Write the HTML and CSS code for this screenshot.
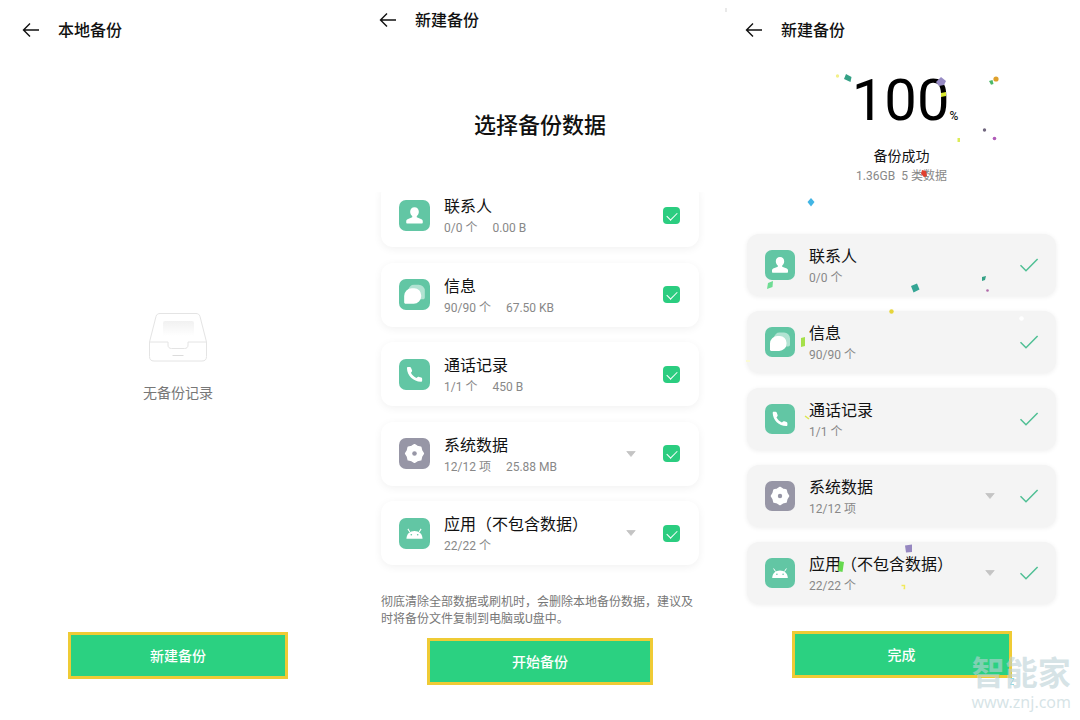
FILE: index.html
```html
<!DOCTYPE html>
<html lang="zh-CN">
<head>
<meta charset="utf-8">
<meta name="viewport" content="width=device-width, initial-scale=1">
<title>本地备份</title>
<link rel="stylesheet" href="styles.css">
</head>
<body>
<svg class="sprite" aria-hidden="true">
  <symbol id="i-back" viewBox="0 0 18 16"><path d="M8 1.500 1.500 8 8 14.500M1.500 8H17" fill="none" stroke="currentColor" stroke-width="1.400"/></symbol>
  <symbol id="i-contact" viewBox="0 0 30 30"><path d="M15 7c2.600 0 4.200 1.900 4.200 4.300 0 1.800-.8 3.400-2 4.300v1.200l4.600 1.800c.8.400 1.200 1 1.200 1.800v1.400c0 .6-.4 1-1 1H8c-.6 0-1-.4-1-1v-1.400c0-.8.4-1.400 1.200-1.800l4.600-1.800v-1.200c-1.200-.9-2-2.500-2-4.300C10.800 8.900 12.400 7 15 7z" fill="#fff"/></symbol>
  <symbol id="i-message" viewBox="0 0 30 30"><path d="M14.500 5.500H19a6 6 0 0 1 6 6v6.300c0 1.100-.7 1.700-1.700 1.700H15l-6-9c.8-3 2.500-5 5.500-5z" fill="#fff" opacity=".5"/><path d="M12.500 9h2.300a6.700 6.700 0 0 1 6.700 6.700v1A7.300 7.300 0 0 1 14.200 24H6.500c-.9 0-1.500-.6-1.500-1.500v-6A7.500 7.500 0 0 1 12.500 9z" fill="#fff"/></symbol>
  <symbol id="i-phone" viewBox="0 0 30 30"><path d="M7.700 9c0-.7.400-1.200 1-1.200h1.800c.6 0 1 .3 1.200.8l.9 2.400c.2.500.1.900-.2 1.300l-.9 1.100c1.300 2.300 3 3.900 5.400 5.100l1.200-1c.4-.3.800-.4 1.300-.2l2.200.7c.5.200.8.600.8 1.200v1.700c0 .7-.5 1.200-1.200 1.200C13.800 21.800 7.900 16.200 7.700 9z" fill="#fff"/></symbol>
  <symbol id="i-system" viewBox="0 0 30 30"><path d="M15 6.500l2.700 1.700 3.300.8.800 3.300 1.700 2.700-1.700 2.700-.8 3.300-3.300.8-2.700 1.700-2.700-1.700-3.300-.8-.8-3.300L6.500 15l1.700-2.700L9 9l3.300-.8z" fill="#fff" stroke="#fff" stroke-width="1.600" stroke-linejoin="round"/><circle cx="15" cy="15" r="2.200" fill="#9796a6"/></symbol>
  <symbol id="i-app" viewBox="0 0 30 30"><path d="M10.500 13.500 8.600 10.500M19.500 13.500l1.900-3" fill="none" stroke="#fff"/><path d="M7.200 20c.2-4.800 3.400-7.500 7.800-7.500s7.600 2.700 7.800 7.500z" fill="#fff"/><circle cx="11.900" cy="16.200" r=".8" fill="#62c6a4"/><circle cx="18.100" cy="16.200" r=".8" fill="#62c6a4"/></symbol>
  <symbol id="i-caret" viewBox="0 0 10 6"><path d="M.8.500h8.400L5 5.500z" fill="#c4c4c4" stroke="#c4c4c4" stroke-linejoin="round" stroke-width=".8"/></symbol>
  <symbol id="i-tick" viewBox="0 0 20 16"><path d="M1.500 8.300 7 13.800 18.600 2" fill="none" stroke="#4fbf94" stroke-width="1.500"/></symbol>
</svg>

<main class="screens">
  <section class="screen screen-empty">
    <header class="bar">
      <button class="back" type="button" aria-label="返回"><svg><use href="#i-back"/></svg></button>
      <h1 class="bar-title">本地备份</h1>
    </header>
    <div class="empty">
      <svg class="tray" viewBox="0 0 60 52" aria-hidden="true">
        <defs><linearGradient id="fade" x1="0" y1="0" x2="0" y2="1"><stop offset="0" stop-color="#f1f1f1"/><stop offset="1" stop-color="#fff"/></linearGradient></defs>
        <path d="M17 9h27q2 0 2 2v13H15V11q0-2 2-2z" fill="url(#fade)"/>
        <path d="M1.500 30 8 4.500C8.700 2.300 10 1.500 12 1.500h36c2 0 3.300.8 4 3L58.500 30v14.500c0 3-1.500 4.500-4.500 4.500H6c-3 0-4.500-1.500-4.500-4.500zM1.500 30H20v3c0 2.500 1.500 3.500 3.500 3.500h13c2 0 3.500-1 3.500-3.500v-3h18.500" fill="none" stroke="#e4e4e4"/>
        <path d="M24.500 43.500h11" stroke="#dcdcdc"/>
      </svg>
      <p class="empty-text">无备份记录</p>
    </div>
    <button class="action" type="button">新建备份</button>
  </section>

  <section class="screen screen-pick">
    <header class="bar">
      <button class="back" type="button" aria-label="返回"><svg><use href="#i-back"/></svg></button>
      <h1 class="bar-title">新建备份</h1>
    </header>
    <h2 class="heading">选择备份数据</h2>
    <div class="scroller">
      <ul class="list">
        <li class="card">
          <svg class="icon"><use href="#i-contact"/></svg>
          <label class="info" for="c1"><span class="name">联系人</span><span class="meta"><span>0/0 个</span><span>0.00 B</span></span></label>
          <input class="check" id="c1" type="checkbox" checked>
        </li>
        <li class="card">
          <svg class="icon"><use href="#i-message"/></svg>
          <label class="info" for="c2"><span class="name">信息</span><span class="meta"><span>90/90 个</span><span>67.50 KB</span></span></label>
          <input class="check" id="c2" type="checkbox" checked>
        </li>
        <li class="card">
          <svg class="icon"><use href="#i-phone"/></svg>
          <label class="info" for="c3"><span class="name">通话记录</span><span class="meta"><span>1/1 个</span><span>450 B</span></span></label>
          <input class="check" id="c3" type="checkbox" checked>
        </li>
        <li class="card">
          <svg class="icon icon-gray"><use href="#i-system"/></svg>
          <label class="info" for="c4"><span class="name">系统数据</span><span class="meta"><span>12/12 项</span><span>25.88 MB</span></span></label>
          <button class="caret" type="button" aria-label="展开"><svg><use href="#i-caret"/></svg></button>
          <input class="check" id="c4" type="checkbox" checked>
        </li>
        <li class="card">
          <svg class="icon"><use href="#i-app"/></svg>
          <label class="info" for="c5"><span class="name">应用（不包含数据）</span><span class="meta"><span>22/22 个</span></span></label>
          <button class="caret" type="button" aria-label="展开"><svg><use href="#i-caret"/></svg></button>
          <input class="check" id="c5" type="checkbox" checked>
        </li>
      </ul>
    </div>
    <p class="note">彻底清除全部数据或刷机时，会删除本地备份数据，建议及时将备份文件复制到电脑或U盘中。</p>
    <button class="action" type="button">开始备份</button>
  </section>

  <section class="screen screen-done">
    <header class="bar">
      <button class="back" type="button" aria-label="返回"><svg><use href="#i-back"/></svg></button>
      <h1 class="bar-title">新建备份</h1>
    </header>
    <div class="result">
      <p class="percent">100<span class="unit">%</span></p>
      <p class="status">备份成功</p>
      <p class="total"><span>1.36GB</span><span>5 类数据</span></p>
    </div>
    <ul class="list">
      <li class="card">
        <svg class="icon"><use href="#i-contact"/></svg>
        <div class="info"><span class="name">联系人</span><span class="meta">0/0 个</span></div>
        <svg class="tick"><use href="#i-tick"/></svg>
      </li>
      <li class="card">
        <svg class="icon"><use href="#i-message"/></svg>
        <div class="info"><span class="name">信息</span><span class="meta">90/90 个</span></div>
        <svg class="tick"><use href="#i-tick"/></svg>
      </li>
      <li class="card">
        <svg class="icon"><use href="#i-phone"/></svg>
        <div class="info"><span class="name">通话记录</span><span class="meta">1/1 个</span></div>
        <svg class="tick"><use href="#i-tick"/></svg>
      </li>
      <li class="card">
        <svg class="icon icon-gray"><use href="#i-system"/></svg>
        <div class="info"><span class="name">系统数据</span><span class="meta">12/12 项</span></div>
        <button class="caret" type="button" aria-label="展开"><svg><use href="#i-caret"/></svg></button>
        <svg class="tick"><use href="#i-tick"/></svg>
      </li>
      <li class="card">
        <svg class="icon"><use href="#i-app"/></svg>
        <div class="info"><span class="name">应用（不包含数据）</span><span class="meta">22/22 个</span></div>
        <button class="caret" type="button" aria-label="展开"><svg><use href="#i-caret"/></svg></button>
        <svg class="tick"><use href="#i-tick"/></svg>
      </li>
    </ul>
    <button class="action" type="button">完成</button>

    <svg class="confetti" viewBox="720 0 360 720" aria-hidden="true">
      <circle cx="837.500" cy="76" r="1.700" fill="#f3f08a"/>
      <path d="m846 74 5.500 3-1 5-6.500-3z" fill="#35a186"/>
      <path d="m941 77 5 4-2 4-5 1-3-4z" fill="#978bc4"/>
      <path d="m941 93 5-1v4l-5 1z" fill="#d9e831"/>
      <circle cx="996" cy="79" r="2.600" fill="#dfa02c"/>
      <path d="m989 81 3.500-1 1 4-2.500.8z" fill="#4cb868"/>
      <circle cx="984.500" cy="130" r="1.700" fill="#71677f"/>
      <circle cx="994.500" cy="138.500" r="1.800" fill="#b05bb8"/>
      <path d="M957.500 138h2.500v4h-2.500z" fill="#dcec58"/>
      <path d="m922 170 4 1 1 5-3 1-3-3z" fill="#e0402f"/>
      <path d="m811 198 3.500 4-3.500 4.500-3.500-4.500z" fill="#42b5e4"/>
      <path d="m768 283 5-2-.5 6-5.500 2z" fill="#6fdc94"/>
      <path d="m911 286 6-2.500 2.500 6-6 3z" fill="#35a594"/>
      <path d="m982 277 4-1-1 4-3 1z" fill="#35a186"/>
      <circle cx="987.500" cy="290.500" r="1.300" fill="#b069a8"/>
      <circle cx="891.500" cy="311.500" r="2.200" fill="#e6d53b"/>
      <circle cx="1021.500" cy="318.500" r="2.300" fill="#fff"/>
      <path d="m801 338 4-1v9l-4 1z" fill="#a5e04a"/>
      <path d="M746 360h4v2h-4z" fill="#fbfbd3"/>
      <path d="m805 416 4 3" stroke="#dde64e" stroke-width="1.500"/>
      <path d="m905 545.500 7-1v7.500l-6 .5z" fill="#9687c0"/>
      <path d="m839 561 5 1-1.500 10-4.500-1z" fill="#66d94f"/>
      <path d="M901.500 585.500h3v3h-1" fill="none" stroke="#f1e95b" stroke-width="1.400"/>
      <path d="M1010.500 678.500h3.500l-3.500 6h3.500" fill="none" stroke="#8fdbe4"/>
      <path d="M726 8v4" stroke="#e2e2e2" stroke-width="1.500"/>
    </svg>
  </section>
</main>
<div class="watermark"><span class="wm-name">智能家</span><span class="wm-url">www.znj.com</span></div>
</body>
</html>
```

FILE: styles.css
```css
* { box-sizing: border-box; }

body {
  margin: 0;
  position: relative;
  background: #fff;
  color: #111;
  font-family: Roboto, "Noto Sans CJK SC", sans-serif;
}

h1, h2, p, ul { margin: 0; padding: 0; }
ul { list-style: none; }
button { font-family: inherit; cursor: pointer; }
.sprite { display: none; }

.screens {
  display: grid;
  grid-template-columns: repeat(3, minmax(0, 1fr));
  min-height: 100vh;
}

.screen {
  position: relative;
  display: flex;
  flex-direction: column;
}

.screen-empty { padding: 18px 26px 0 22px; }
.screen-pick { padding: 8px 21px 0; }
.screen-done { padding: 18px 24px 0 27px; }
.screen-pick .bar { margin-left: -2px; }
.screen-done .bar { margin-left: -2px; }

.bar {
  display: flex;
  align-items: center;
  gap: 18px;
  height: 24px;
}

.back {
  display: flex;
  padding: 0;
  border: 0;
  background: none;
  color: #111;
}
.back svg { width: 18px; height: 16px; }

.bar-title {
  padding-top: 2px;
  font-size: 16px;
  line-height: 24px;
  font-weight: 500;
}

/* primary button */
.action {
  align-self: center;
  width: 220px;
  height: 47px;
  padding: 0;
  border: 3px solid #efcb35;
  background: #2bd181;
  color: #fff;
  font-size: 14px;
  line-height: 20px;
  font-weight: 500;
}
.screen-pick .action { width: 226px; }

/* empty state */
.empty {
  display: flex;
  flex-direction: column;
  align-items: center;
  gap: 18px;
  margin-top: 270px;
}
.tray { width: 60px; height: 52px; }
.empty-text {
  color: #777;
  font-size: 14px;
  line-height: 22px;
}
.screen-empty .action { margin-top: 228px; }

/* data selection */
.heading {
  margin-top: 78px;
  text-align: center;
  font-size: 22px;
  line-height: 32px;
  font-weight: 500;
}

.scroller {
  margin: 50px -21px 0;
  padding: 0 21px 16px;
  overflow: hidden;
}
.scroller .list {
  min-height: 382px;
  margin-top: -9px;
  justify-content: space-between;
  gap: 0;
}

.list {
  display: flex;
  flex-direction: column;
  gap: 15px;
}

.card {
  display: flex;
  align-items: center;
  height: 64px;
  padding: 0 19px 0 18px;
  border-radius: 12px;
  background: #fff;
  box-shadow: 0 2px 8px rgba(0, 0, 0, .06);
}

.icon {
  flex: none;
  width: 31px;
  height: 31px;
  margin-right: 14px;
  border-radius: 7px;
  background: #62c6a4;
}
.icon-gray { background: #9796a6; }

.info {
  flex: 1;
  display: flex;
  flex-direction: column;
  padding-top: 2px;
}
.name {
  font-size: 16px;
  line-height: 24px;
}
.meta {
  display: flex;
  gap: 15px;
  color: #888;
  font-size: 12px;
  line-height: 18px;
}

.caret {
  display: flex;
  padding: 0;
  margin-right: 27px;
  border: 0;
  background: none;
}
.caret svg { width: 10px; height: 6px; }

.check {
  appearance: none;
  display: flex;
  justify-content: center;
  width: 17px;
  height: 17px;
  margin: 0;
  border-radius: 4px;
  background: #ddd;
}
.check:checked { background: #2bcd80; }
.check:checked::after {
  content: "";
  width: 5px;
  height: 9px;
  margin-top: 3px;
  border: solid #fff;
  border-width: 0 1px 1px 0;
  transform: rotate(45deg);
}

.note {
  margin-top: 13px;
  color: #777;
  font-size: 12px;
  line-height: 17px;
}
.screen-pick .action { margin-top: 10px; }

/* finished backup */
.result {
  display: flex;
  flex-direction: column;
  align-items: center;
  height: 192px;
  padding-top: 28px;
}
.percent {
  padding-left: 7px;
  color: #000;
  font-size: 58px;
  line-height: 60px;
}
.unit { font-size: 12px; }
.status {
  font-size: 14px;
  line-height: 20px;
}
.total {
  display: flex;
  gap: 6px;
  color: #888;
  font-size: 12px;
  line-height: 20px;
}

.screen-done .card {
  height: 62px;
  padding-right: 17px;
  background: #f4f4f4;
  box-shadow: 0 1px 5px rgba(0, 0, 0, .07);
}
.screen-done .icon { width: 30px; height: 30px; }
.screen-done .caret { margin-right: 24px; }
.tick { width: 20px; height: 16px; }
.screen-done .action { margin-top: 27px; }

.confetti {
  position: absolute;
  top: 0;
  left: 0;
  width: 360px;
  height: 720px;
  pointer-events: none;
}

.watermark {
  position: absolute;
  right: 9px;
  bottom: 8px;
  display: flex;
  flex-direction: column;
  align-items: center;
  color: rgba(187, 209, 214, .6);
  pointer-events: none;
}
.wm-name {
  font-size: 33px;
  line-height: 36px;
  font-weight: 700;
}
.wm-url {
  font-family: "Noto Sans", sans-serif;
  font-size: 16px;
  line-height: 20px;
}
```
